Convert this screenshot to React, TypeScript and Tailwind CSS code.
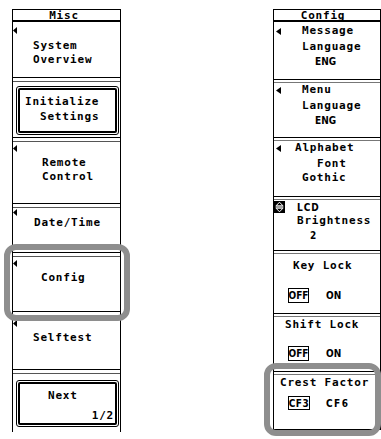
import React from "react";

const M =
  "font-['DejaVu_Sans_Mono',monospace] font-bold text-[11px] tracking-[0.8px] whitespace-pre text-black";
const N =
  "font-['Liberation_Sans_Narrow','DejaVu_Sans_Condensed',sans-serif] font-bold text-[10px] text-black whitespace-pre";

function ArrowL() {
  return (
    <svg width="4" height="7" viewBox="0 0 4 7" className="block shrink-0">
      <path d="M4 0V7L0 3.5Z" fill="#000" />
    </svg>
  );
}

function ArrowR() {
  return (
    <svg width="5" height="7" viewBox="0 0 5 7" className="block shrink-0">
      <path d="M5 0V7L0 3.5Z" fill="#000" />
    </svg>
  );
}

function UpDown() {
  return (
    <svg width="11" height="12" viewBox="0 0 11 12" className="block shrink-0">
      <rect width="11" height="12" fill="#000" />
      <path d="M5.5 1.2 L9 4.8 H2 Z" fill="none" stroke="#fff" strokeWidth="1" />
      <path d="M1.5 6 H9.5" stroke="#fff" strokeWidth="1" />
      <path d="M2 7.2 H9 L5.5 10.8 Z" fill="none" stroke="#fff" strokeWidth="1" />
    </svg>
  );
}

function SepL() {
  return <div className="h-[5px] shrink-0 border-t border-b border-t-black border-b-[#555]" />;
}
function SepR() {
  return <div className="h-[4px] shrink-0 border-t border-b border-t-black border-b-[#777]" />;
}

function LeftPanel() {
  return (
    <div className="w-[109px] h-[423px] shrink-0 border-x border-t border-black flex flex-col">
      {/* title 10-22 */}
      <div className="h-[12px] shrink-0 border-b-2 border-black flex justify-center pr-[5px]">
        <span className={`${M} leading-[10px] pt-[1px]`}>Misc</span>
      </div>

      {/* System Overview 22-77 */}
      <div className="h-[55px] shrink-0 flex flex-col">
        <div className="mt-[5px] h-[7px]">
          <ArrowL />
        </div>
        <div className={`${M} leading-[14px] mt-[5px] pl-[20px]`}>System</div>
        <div className={`${M} leading-[14px] pl-[20px]`}>Overview</div>
      </div>
      <SepL />

      {/* Initialize Settings 82-137 */}
      <div className="h-[55px] shrink-0 flex flex-col">
        <div className="mt-[4px] ml-[3px] mr-[1px] h-[49px] border border-black rounded-[3px] p-[1px]">
          <div className="h-full border-2 border-black rounded-[2px] flex flex-col pt-[5px]">
            <div className={`${M} leading-[14px] pl-[5px]`}>Initialize</div>
            <div className={`${M} leading-[14px] mt-[1px] pl-[20px]`}>Settings</div>
          </div>
        </div>
      </div>
      <SepL />

      {/* Remote Control 142-203 */}
      <div className="h-[61px] shrink-0 flex flex-col">
        <div className="mt-[3px] h-[7px]">
          <ArrowL />
        </div>
        <div className={`${M} leading-[14px] mt-[4px] pl-[29px]`}>Remote</div>
        <div className={`${M} leading-[14px] pl-[29px]`}>Control</div>
      </div>
      <SepL />

      {/* Date/Time 208-252 */}
      <div className="h-[44px] shrink-0 flex flex-col">
        <div className="mt-[1px] h-[7px]">
          <ArrowL />
        </div>
        <div className={`${M} leading-[14px] pl-[21px]`}>Date/Time</div>
      </div>
      <SepL />

      {/* Config 257-311 */}
      <div className="h-[54px] shrink-0 flex flex-col">
        <div className="mt-[3px] h-[7px]">
          <ArrowL />
        </div>
        <div className={`${M} leading-[14px] mt-[4px] pl-[28px]`}>Config</div>
      </div>
      <SepL />

      {/* Selftest 316-369 */}
      <div className="h-[53px] shrink-0 flex flex-col">
        <div className="mt-[4px] h-[7px]">
          <ArrowL />
        </div>
        <div className={`${M} leading-[14px] mt-[4px] pl-[20px]`}>Selftest</div>
      </div>
      <SepL />

      {/* Next 374-432 */}
      <div className="h-[58px] shrink-0 flex flex-col">
        <div className="mt-[6px] ml-[3px] mr-[1px] h-[47px] border border-black rounded-[3px] p-[1px]">
          <div className="h-full border-2 border-black rounded-[2px] flex flex-col pt-[5px]">
            <div className={`${M} leading-[14px] pl-[28px]`}>Next</div>
            <div className={`${M} leading-[14px] mt-[6px] text-right pr-[1px]`}>1/2</div>
          </div>
        </div>
      </div>
    </div>
  );
}

function RightPanel() {
  return (
    <div className="w-[108px] shrink-0 border-x border-t border-black flex flex-col ml-[152px]">
      {/* title */}
      <div className="h-[12px] shrink-0 border-b-2 border-black flex justify-center pr-[8px]">
        <span className={`${M} leading-[10px] pt-[1px]`}>Config</span>
      </div>

      {/* Message Language 22-79 */}
      <div className="h-[57px] shrink-0 flex flex-col pt-[2px]">
        <div className="flex items-center h-[15px]">
          <span className="ml-[2px]">
            <ArrowR />
          </span>
          <span className={`${M} ml-[21px]`}>Message</span>
        </div>
        <div className={`${M} leading-[15px] pl-[28px]`}>Language</div>
        <div className={`${N} leading-[15px] pl-[41px]`}>ENG</div>
      </div>
      <SepR />

      {/* Menu Language 83-137 */}
      <div className="h-[54px] shrink-0 flex flex-col">
        <div className="flex items-center h-[15px]">
          <span className="ml-[2px]">
            <ArrowR />
          </span>
          <span className={`${M} ml-[21px]`}>Menu</span>
        </div>
        <div className={`${M} leading-[15px] pl-[28px]`}>Language</div>
        <div className={`${N} leading-[15px] pl-[41px]`}>ENG</div>
      </div>
      <SepR />

      {/* Alphabet Font 141-196 */}
      <div className="h-[55px] shrink-0 flex flex-col">
        <div className="flex items-center h-[15px]">
          <span className="ml-[2px]">
            <ArrowR />
          </span>
          <span className={`${M} ml-[14px]`}>Alphabet</span>
        </div>
        <div className={`${M} leading-[15px] pl-[43px]`}>Font</div>
        <div className={`${M} leading-[14px] pl-[28px]`}>Gothic</div>
      </div>
      <SepR />

      {/* LCD Brightness 200-250 */}
      <div className="h-[50px] shrink-0 flex flex-col">
        <div className="flex items-center h-[14px]">
          <UpDown />
          <span className={`${N} tracking-[1px] ml-[12px]`}>LCD</span>
        </div>
        <div className={`${M} leading-[14px] pl-[23px]`}>Brightness</div>
        <div className={`${N} leading-[15px] pl-[36px]`}>2</div>
      </div>
      <SepR />

      {/* Key Lock 254-313 */}
      <div className="h-[59px] shrink-0 flex flex-col">
        <div className={`${M} leading-[15px] mt-[4px] pl-[19px]`}>Key Lock</div>
        <div className="mt-[15px] flex items-center h-[15px]">
          <div className={`ml-[14px] w-[21px] h-[15px] border border-black flex items-center justify-center ${N}`}>
            OFF
          </div>
          <span className={`ml-[17px] ${N}`}>ON</span>
        </div>
      </div>
      <SepR />

      {/* Shift Lock 317-371 */}
      <div className="h-[54px] shrink-0 flex flex-col">
        <div className={`${M} leading-[15px] pl-[11px]`}>Shift Lock</div>
        <div className="mt-[14px] flex items-center h-[15px]">
          <div className={`ml-[14px] w-[21px] h-[15px] border border-black flex items-center justify-center ${N}`}>
            OFF
          </div>
          <span className={`ml-[17px] ${N}`}>ON</span>
        </div>
      </div>
      <SepR />

      {/* Crest Factor 375-430 */}
      <div className="h-[55px] shrink-0 flex flex-col border-b border-black">
        <div className={`${M} leading-[15px] pl-[6px]`}>Crest Factor</div>
        <div className="mt-[6px] flex items-center h-[14px]">
          <div
            className={`ml-[14px] w-[22px] h-[14px] border border-black flex items-center justify-center tracking-[0.5px] ${N}`}
          >
            CF3
          </div>
          <span className={`ml-[16px] tracking-[1.5px] ${N}`}>CF6</span>
        </div>
      </div>
    </div>
  );
}

export default function App() {
  return (
    <div className="relative w-[381px] h-[439px] bg-white overflow-hidden flex items-start pt-[9px] pl-[12px]">
      <LeftPanel />
      <RightPanel />

      {/* gray highlight frames */}
      <div className="absolute left-[4px] top-[244px] w-[126px] h-[77px] border-[6px] border-[#8e8e8e] rounded-[12px] pointer-events-none" />
      <div className="absolute left-[264px] top-[363px] w-[117px] h-[73px] border-[6px] border-[#8e8e8e] rounded-[12px] pointer-events-none" />
    </div>
  );
}
